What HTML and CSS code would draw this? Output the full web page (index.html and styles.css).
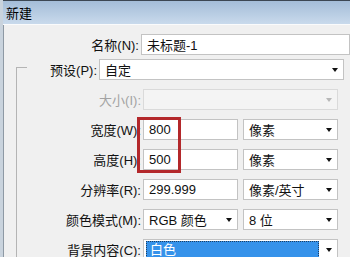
FILE: index.html
```html
<!DOCTYPE html>
<html lang="zh-CN">
<head>
    <meta charset="UTF-8">
    <title>新建</title>
    <link rel="stylesheet" href="styles.css">
</head>
<body>
<div class="dialog">
    <div class="titlebar">新建</div>
    <div class="content">
        <div class="row">
            <span class="lbl lbl-top">名称(N):</span>
            <div class="field name">未标题-1</div>
        </div>
        <div class="row preset-row">
            <span class="lbl lbl-preset">预设(P):</span>
            <div class="select preset">自定<i class="arrow"></i></div>
        </div>
        <div class="group">
            <div class="row">
                <span class="lbl disabled">大小(I):</span>
                <div class="select full off"><i class="arrow"></i></div>
            </div>
            <div class="row">
                <span class="lbl">宽度(W):</span>
                <div class="field half">800</div>
                <div class="select half">像素<i class="arrow"></i></div>
            </div>
            <div class="row">
                <span class="lbl">高度(H):</span>
                <div class="field half">500</div>
                <div class="select half">像素<i class="arrow"></i></div>
            </div>
            <div class="row">
                <span class="lbl">分辨率(R):</span>
                <div class="field half">299.999</div>
                <div class="select half">像素/英寸<i class="arrow"></i></div>
            </div>
            <div class="row">
                <span class="lbl">颜色模式(M):</span>
                <div class="select half">RGB 颜色<i class="arrow"></i></div>
                <div class="select half">8 位<i class="arrow"></i></div>
            </div>
            <div class="row">
                <span class="lbl">背景内容(C):</span>
                <div class="select full bg"><span class="picked">白色</span><i class="arrow"></i></div>
            </div>
        </div>
    </div>
    <!-- 标注框 -->
    <div class="mark"></div>
</div>
</body>
</html>
```

FILE: styles.css
```css
*{margin: 0;padding: 0;box-sizing: border-box;}
html,body{
    overflow: hidden;
    height: 100vh;
}
body{
    font-family: "Liberation Sans", "Noto Sans CJK SC", sans-serif;
    font-size: 13px;
    color: #111;
    background-color: #f0f0f0;
}
.dialog{
    position: relative;
    width: 350px;
    height: 257px;
    border-left: 3px solid #c9d3dd;
    box-shadow: inset 1px 0 0 #8e99a4;
    overflow: hidden;
}
.titlebar{
    height: 25px;
    line-height: 25px;
    padding-left: 3px;
    border-top: 1px solid #3c4753;
    border-bottom: 1px solid #fafbfc;
    background: linear-gradient(#a4bdd8, #c9daec);
    color: #000;
}
.content{
    padding-top: 9px;
}
.row{
    display: flex;
    align-items: center;
    height: 21px;
}
.lbl{
    width: 124px;
    margin-right: 2px;
    text-align: right;
    white-space: nowrap;
}
.lbl-top{width: 138px;}
.lbl-preset{width: 94px;}
.lbl.disabled{color: #a3a3a3;}
.preset-row{margin-top: 4px;}

.group{
    position: relative;
    margin: -13px 0 0 13px;
    padding-top: 22px;
    border-left: 1px solid #b4b4b4;
    display: flex;
    flex-direction: column;
    gap: 9px;
}
.group::before{
    content: "";
    position: absolute;
    left: 0;
    top: 0;
    width: 10px;
    border-top: 1px solid #b4b4b4;
}

.field,.select{
    display: flex;
    align-items: center;
    height: 21px;
    padding-left: 5px;
    background-color: #fff;
    border: 1px solid #c3c3c3;
    white-space: nowrap;
}
.field.name{width: 212px;}
.select.preset{width: 245px;}
.half{width: 95px;}
.half + .half{margin-left: 5px;}
.full{width: 195px;}
.select .arrow{
    margin-left: auto;
    margin-right: 5px;
    border-top: 4px solid #111;
    border-left: 3.5px solid transparent;
    border-right: 3.5px solid transparent;
}
.select.off{
    background-color: #f4f4f4;
    border-color: #dadada;
}
.select.off .arrow{border-top-color: #b8b8b8;}
.select.bg{padding-left: 2px;}
.bg .picked{
    width: 173px;
    height: 17px;
    line-height: 15px;
    padding-left: 3px;
    color: #fff;
    background-color: #3592ea;
    border: 1px dotted #1d3d60;
}

.mark{
    position: absolute;
    left: 134px;
    top: 117px;
    width: 44px;
    height: 56px;
    border: 3px solid #b3282b;
}
```
